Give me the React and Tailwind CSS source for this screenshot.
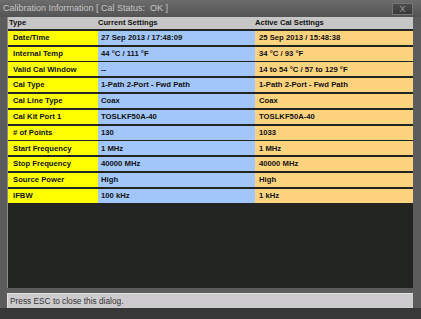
import React from 'react';

const rows = [
    ['Date/Time', '27 Sep 2013 / 17:48:09', '25 Sep 2013 / 15:48:38'],
    ['Internal Temp', '44 °C / 111 °F', '34 °C / 93 °F'],
    ['Valid Cal Window', '--', '14 to 54 °C / 57 to 129 °F'],
    ['Cal Type', '1-Path 2-Port - Fwd Path', '1-Path 2-Port - Fwd Path'],
    ['Cal Line Type', 'Coax', 'Coax'],
    ['Cal Kit Port 1', 'TOSLKF50A-40', 'TOSLKF50A-40'],
    ['# of Points', '130', '1033'],
    ['Start Frequency', '1 MHz', '1 MHz'],
    ['Stop Frequency', '40000 MHz', '40000 MHz'],
    ['Source Power', 'High', 'High'],
    ['IFBW', '100 kHz', '1 kHz'],
];

export default function App() {
    return (
        <div
            className="w-[421px] h-[319px] flex flex-col bg-[#5c5c5c] overflow-hidden"
            style={{ fontFamily: '"Liberation Sans", Arial, sans-serif' }}
        >
            {/* title bar */}
            <div className="h-[17px] flex items-center pl-[3px] pr-[8px] bg-gradient-to-b from-[#6c6c6c] to-[#545454]">
                <span className="text-[9px] text-[#c6c6c6] whitespace-pre leading-none">
                    Calibration Information [ Cal Status:  OK ]
                </span>
                <div className="ml-auto w-[21px] h-[12px] mt-[1px] flex items-center justify-center bg-gradient-to-b from-[#4c4c4c] to-[#3a3a3a] border border-[#747474] text-[9px] leading-none text-[#9c9c9c]">
                    X
                </div>
            </div>

            {/* body */}
            <div className="flex-1 flex flex-col pl-[7px] pr-[8px]">
                <div className="h-[271px] flex flex-col bg-[#232523] border-l border-[#8a8a8a]">
                    <div className="h-[12px] grid grid-cols-[90px_157px_158px] items-center bg-[#c6c6c6] text-[7.6px] font-bold text-[#111] leading-none">
                        <span className="pl-[1px]">Type</span>
                        <span className="pl-[0px]">Current Settings</span>
                        <span className="pl-[0px]">Active Cal Settings</span>
                    </div>
                    {rows.map(([label, current, active]) => (
                        <div
                            key={label}
                            className="mt-[1.8px] h-[14px] grid grid-cols-[90px_157px_158px] text-[7.7px] font-bold text-[#111] leading-none"
                        >
                            <div className="bg-[#ffff00] flex items-center pl-[5px]">{label}</div>
                            <div className="bg-[#a2c6fa] flex items-center pl-[3px]">{current}</div>
                            <div className="bg-[#fed380] flex items-center pl-[4px]">{active}</div>
                        </div>
                    ))}
                </div>
                <div className="mt-[5px] h-[15px] flex items-center pl-[2px] bg-[#cecbce] border-t border-[#e2e2e2] border-l border-[#8a8a8a] text-[8.3px] text-[#333] leading-none">
                    Press ESC to close this dialog.
                </div>
                <div className="flex-1" />
            </div>
            <div className="h-[11px] bg-[#383838]" />
        </div>
    );
}
